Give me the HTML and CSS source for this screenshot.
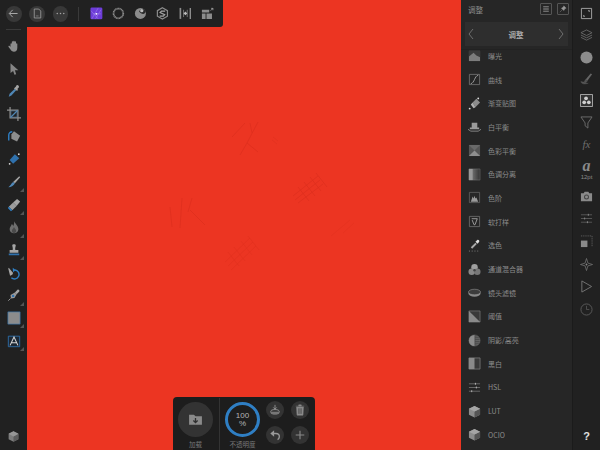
FILE: index.html
```html
<!DOCTYPE html>
<html lang="zh">

<head>
    <meta charset="UTF-8">
    <title>Affinity Photo</title>
    <link rel="stylesheet" href="styles.css">
</head>

<body>
    <div class="app">
        <div class="tools">
            <div class="toolsline"></div>
            <div class="tool"><svg viewBox="0 0 16 16"><path d="M4 9V5.500a.8.8 0 0 1 1.500 0V8V3.500a.8.8 0 0 1 1.600 0V7.500V2.800a.8.8 0 0 1 1.600 0V7.500V3.500a.8.8 0 0 1 1.600 0V8.500V5.500a.8.8 0 0 1 1.500 0V10c0 3-1.500 4.500-3.800 4.500-2 0-3-1-4-2.500L1.800 9c-.6-1 .7-1.800 1.400-1z" fill="#8c8c8c"/></svg></div>
            <div class="tool"><svg viewBox="0 0 16 16"><path d="M4 1.500 13 9.500H9L10.500 14 8.500 14.500 7 10.200 4 12.500z" fill="#858585"/></svg></div>
            <div class="tool"><svg viewBox="0 0 16 16"><path d="M2 14.500 3 11 9 5.500 10.500 7 5 13z" fill="#4f86b5"/><path d="M8.500 4.500 10 3l1-1.500c1-1 3.500 1 2.500 2.500L12 5.500 12.500 7 11.300 7.800 8 5z" fill="#a5a5a5"/></svg></div>
            <div class="tool"><svg viewBox="0 0 16 16"><path d="M3.500 0V12.500H16M0 3.500H12.500V16" fill="none" stroke="#8f8f8f" stroke-width="1.400"/><path d="M4 12 12 4" stroke="#4f86b5" stroke-width="1.400"/><path d="M4.500 4.500H11.500V11.500H4.500z" fill="none" stroke="#4f86b5" stroke-width=".6"/></svg></div>
            <div class="tool"><svg viewBox="0 0 16 16"><path d="M5 5 8 1.500 15 6.500 11.500 13 5 10z" fill="#8d8d8d"/><path d="M2 12V6C2 3 4 2 6 2" fill="none" stroke="#2f7fc4" stroke-width="1.600"/></svg></div>
            <div class="tool"><svg viewBox="0 0 16 16"><path d="M3 9 9 2.500 14 7 7 13.500z" fill="#2f71ad"/><circle cx="3" cy="13.500" r="1" fill="#ddd"/><circle cx="13.500" cy="2.500" r="1" fill="#ddd"/></svg></div>
            <div class="tool more"><svg viewBox="0 0 16 16"><path d="M7 8 14 1.500 15 2.500 9 9.500z" fill="#a5a5a5"/><path d="M7 8 9 9.500C8 12 5 14 1.500 14 4 12.500 4.500 9.500 7 8z" fill="#4f86b5"/></svg></div>
            <div class="tool more"><svg viewBox="0 0 16 16"><path d="M7 5 11.500 1 15 4 11 9z" fill="#a5a5a5"/><path d="M2 10 7 5 11 9 6 14z" fill="#9c9c9c"/><path d="M2 10 6 14 4.500 15 1 11.500z" fill="#2f7fc4"/></svg></div>
            <div class="tool more"><svg viewBox="0 0 16 16"><path d="M8 1C9 4 13 6 13 10.500 13 13.500 10.500 15 8 15S3 13.500 3 10.500C3 7.500 5 7 5.500 4.500 6.500 5.500 7 6 7 7 8 5.500 8.500 3 8 1z" fill="#6e6e6e"/><path d="M8 8C8.500 10 10.500 10.500 10.500 12.500 10.500 14 9 15 8 15S5.500 14 5.500 12.500C5.500 10.500 7.500 10 8 8z" fill="#4b4b4b"/></svg></div>
            <div class="tool more"><svg viewBox="0 0 16 16"><path d="M6 2.500C6 1 10 1 10 2.500 10 4.500 9 5 9.500 8H13V11H3V8H6.500C7 5 6 4.500 6 2.500z" fill="#a5a5a5"/><path d="M2 12H14V14H2z" fill="#2f71ad"/></svg></div>
            <div class="tool"><svg viewBox="0 0 16 16"><path d="M2 2 7 8 6 10 3.500 11 1.500 3z" fill="#a5a5a5"/><path d="M9 4.500A5.200 5.200 0 1 1 5 13.500" fill="none" stroke="#2f7fc4" stroke-width="1.600"/><path d="M6.500 2 10 4.500 7 7z" fill="#2f7fc4"/></svg></div>
            <div class="tool more"><svg viewBox="0 0 16 16"><path d="M9 5 12 2C13 1 15 3 14 4L11 7z" fill="#a5a5a5"/><path d="M9 5 11 7 8.500 11.500 4.500 12 4 8z" fill="#9a9a9a"/><circle cx="7" cy="9" r="1.400" fill="#2f71ad"/><path d="M4 12 1.500 14.500" stroke="#a5a5a5"/></svg></div>
            <div class="tool more"><svg viewBox="0 0 16 16"><path d="M1 1H15V15H1z" fill="#8c8c8c" stroke="#2f71ad" stroke-width=".7"/></svg></div>
            <div class="tool more"><svg viewBox="0 0 16 16"><path d="M1.500 2.500H14.500V14.500H1.500z" fill="#1c2733" stroke="#2f71ad"/><path d="M3.500 13 8 3.500 12.500 13M5.300 10H10.700" fill="none" stroke="#d5d5d5" stroke-width="1.200"/></svg></div>
            <div class="tool cube"><svg viewBox="0 0 16 16"><path d="M8 1.500 14 4.500V11.500L8 14.500 2 11.500V4.500z" fill="#7d7d7d"/><path d="M8 8 14 4.500V11.500L8 14.500z" fill="#5c5c5c"/><path d="M8 8 2 4.500 8 1.500 14 4.500z" fill="#969696"/></svg></div>
        </div>

        <div class="canvas">
            <svg class="marks" viewBox="0 0 433 450">
                <g fill="none" stroke="#d62e1c" stroke-width=".6" opacity=".8">
                    <path d="M231 122 220 143 213 155M220 143 231 152M205 137 218 123M223 123 225 133"/>
                    <path d="M145 227 143 207M153 228 155 198M163 210 178 225M165 198 161 212"/>
                    <path d="M246 137 251 141M245 140 250 144" opacity=".6"/>
                    <path d="M291 176 266 196M293 180 268 200M296 184 271 203M289 173 300 187M283 177 294 191M277 182 288 196M271 187 282 201"/>
                    <path d="M223 238 198 262M226 242 201 266M229 246 204 270M221 236 232 250M214 241 225 255M207 247 218 261M201 252 212 266" opacity=".55"/>
                    <path d="M323 220 304 236M327 223 316 233" opacity=".45"/>
                </g>
            </svg>
        </div>

        <div class="panel">
            <div class="panelhead">
                <span>调整</span>
                <div class="headbtns">
                    <div class="headbtn"><svg viewBox="0 0 10 10"><path d="M1.500 2H8.500M1.500 4H8.500M1.500 6H8.500M1.500 8H8.500" stroke="#8a8a8a"/></svg></div>
                    <div class="headbtn"><svg viewBox="0 0 10 10"><path d="M6 1 9 4 7.500 4.500 6 7 3 4 5.500 2.500zM4 6 1 9" fill="#9a9a9a" stroke="#9a9a9a" stroke-width=".5"/></svg></div>
                </div>
            </div>
            <div class="panelnav">
                <svg class="chev" viewBox="0 0 6 12"><path d="M5 1 1 6 5 11" fill="none" stroke="#6f6f6f"/></svg>
                <b>调整</b>
                <svg class="chev" viewBox="0 0 6 12"><path d="M1 1 5 6 1 11" fill="none" stroke="#6f6f6f"/></svg>
            </div>
            <div class="list">
                <div class="listinner">
                    <div class="row"><svg viewBox="0 0 14 14"><path d="M1 2H13V13H1z" fill="#7c7c7c"/><path d="M1 2H13V9L9 7 6 4 1 8z" fill="#3a3a3a"/></svg><span>曝光</span></div>
                    <div class="row"><svg viewBox="0 0 14 14"><path d="M1.500 1.500H12.500V12.500H1.500z" fill="none" stroke="#7c7c7c" stroke-width=".8"/><path d="M3 11.500C7 11 7 3 11 2.500" fill="none" stroke="#a0a0a0"/></svg><span>曲线</span></div>
                    <div class="row"><svg viewBox="0 0 14 14"><path d="M5 6 9 2 13 6 8 11z" fill="#8c8c8c"/><path d="M3 8 5 6 8 11 6 12z" fill="#b0b0b0"/><circle cx="1.800" cy="12.500" r="1" fill="#ddd"/><circle cx="11" cy="1.500" r="1" fill="#ddd"/></svg><span>渐变贴图</span></div>
                    <div class="row"><svg viewBox="0 0 14 14"><path d="M4 3H10V8H12V10H2V8H4z" fill="#9a9a9a"/><path d="M0 10 3 12H11L14 10" fill="none" stroke="#8a8a8a"/></svg><span>白平衡</span></div>
                    <div class="row"><svg viewBox="0 0 14 14"><path d="M1 1H13V13H1z" fill="#555"/><path d="M1 1 13 1 7 7z" fill="#6a6a6a"/><path d="M1 13 7 7 13 13z" fill="#8e8e8e"/></svg><span>色彩平衡</span></div>
                    <div class="row"><svg viewBox="0 0 14 14"><defs><linearGradient id="pg"><stop offset="0" stop-color="#888"/><stop offset="1" stop-color="#333"/></linearGradient></defs><path d="M1 1H13V13H1z" fill="url(#pg)" stroke="#777" stroke-width=".5"/><path d="M1 1H5V13H1z" fill="#999"/></svg><span>色调分离</span></div>
                    <div class="row"><svg viewBox="0 0 14 14"><path d="M1.500 1.500H12.500V12.500H1.500z" fill="none" stroke="#666" stroke-width=".8"/><path d="M3 11.500 5 6 6 8 7 5 8 8 9 7 11 11.500z" fill="#9a9a9a"/></svg><span>色阶</span></div>
                    <div class="row"><svg viewBox="0 0 14 14"><path d="M1.500 1.500H12.500V12.500H1.500z" fill="none" stroke="#777" stroke-width=".8"/><path d="M4 4H10L7.500 10.500H6.500L4.500 5.500" fill="none" stroke="#a0a0a0"/></svg><span>软打样</span></div>
                    <div class="row"><svg viewBox="0 0 14 14"><path d="M3 9 8 4 9.500 5.500 4.500 10.500z" fill="#aaa"/><path d="M8 3 10 1C11 0 13 2 12 3L10.500 5z" fill="#ddd"/><path d="M1 13H2M4 13H5M7 13H8M10 13H11" stroke="#888"/></svg><span>选色</span></div>
                    <div class="row"><svg viewBox="0 0 14 14"><circle cx="7" cy="4.500" r="3.500" fill="#a0a0a0"/><circle cx="4" cy="9.500" r="3.500" fill="#888"/><circle cx="10" cy="9.500" r="3.500" fill="#777"/><circle cx="7" cy="7.800" r="1.300" fill="#444"/></svg><span>通道混合器</span></div>
                    <div class="row"><svg viewBox="0 0 14 14"><ellipse cx="7" cy="8" rx="6.500" ry="3.500" fill="#888"/><ellipse cx="7" cy="6.500" rx="6.500" ry="3" fill="#3c3c3c" stroke="#9a9a9a" stroke-width=".6"/></svg><span>镜头滤镜</span></div>
                    <div class="row"><svg viewBox="0 0 14 14"><path d="M1 1H13V13H1z" fill="#3a3a3a" stroke="#8a8a8a" stroke-width=".6"/><path d="M1 1 13 13H1z" fill="#8a8a8a"/></svg><span>阈值</span></div>
                    <div class="row"><svg viewBox="0 0 14 14"><circle cx="7" cy="7" r="6" fill="#4a4a4a" stroke="#7a7a7a" stroke-width=".5"/><path d="M7 1A6 6 0 0 0 7 13z" fill="#8c8c8c"/><path d="M8 3H11M8 5H12.500M8 7H13M8 9H12.500M8 11H11" stroke="#777" stroke-width=".6"/></svg><span>阴影/高亮</span></div>
                    <div class="row"><svg viewBox="0 0 14 14"><path d="M1 1H13V13H1z" fill="#3a3a3a" stroke="#8a8a8a" stroke-width=".7"/><path d="M1 1H7V13H1z" fill="#8a8a8a"/></svg><span>黑白</span></div>
                    <div class="row"><svg viewBox="0 0 14 14"><path d="M1 3H13M1 7H13M1 11H13" stroke="#8a8a8a" stroke-width=".7"/><path d="M8 2V4M9 6V8M4 10V12" stroke="#bbb"/></svg><span>HSL</span></div>
                    <div class="row"><svg viewBox="0 0 14 14"><path d="M7 1 13 4V10.500L7 13.500 1 10.500V4z" fill="#8c8c8c"/><path d="M7 7 13 4V10.500L7 13.500z" fill="#555"/><path d="M7 7 1 4 7 1 13 4z" fill="#a5a5a5"/></svg><span>LUT</span></div>
                    <div class="row"><svg viewBox="0 0 14 14"><path d="M7 1 13 4V10.500L7 13.500 1 10.500V4z" fill="#8c8c8c"/><path d="M7 7 13 4V10.500L7 13.500z" fill="#555"/><path d="M7 7 1 4 7 1 13 4z" fill="#a5a5a5"/></svg><span>OCIO</span></div>
                </div>
            </div>
        </div>

        <div class="strip">
            <div class="stripitem tight"><svg viewBox="0 0 14 14"><path d="M1.500 1.500H12.500V12.500H1.500z" fill="none" stroke="#a8a8a8"/><path d="M9 4H10V5M4 9V10H5" fill="none" stroke="#d0d0d0"/></svg></div>
            <div class="stripitem tight"><svg viewBox="0 0 14 14"><path d="M7 1 13 4 7 7 1 4zM1 6.500 7 9.500 13 6.500M1 9 7 12 13 9" fill="none" stroke="#666"/></svg></div>
            <div class="stripitem tight"><svg viewBox="0 0 14 14"><circle cx="7" cy="7" r="6.500" fill="#8c8c8c"/></svg></div>
            <div class="stripitem tight"><svg viewBox="0 0 14 14"><path d="M6 8 11.500 1.500 13 2.500 8 9.500z" fill="#666"/><path d="M6 8 8 9.500C7.500 11 5.500 11.500 4 11 5 10.500 5 9 6 8zM1 10C1 13 5 13.500 9 12" fill="#555" stroke="#555" stroke-width=".5"/></svg></div>
            <div class="stripitem tight"><svg viewBox="0 0 14 14"><path d="M.5.500H13.500V13.500H.5z" fill="#333" stroke="#b0b0b0"/><circle cx="6.500" cy="4.700" r="2" fill="#d0d0d0"/><circle cx="4.500" cy="9" r="2" fill="#d0d0d0"/><circle cx="9.500" cy="9" r="2" fill="#d0d0d0"/></svg></div>
            <div class="stripitem tight"><svg viewBox="0 0 14 14"><path d="M1 1H13L8.500 7.500V13L5.500 10.500V7.500z" fill="none" stroke="#6f6f6f"/></svg></div>
            <div class="stripitem tight fx">fx</div>
            <div class="stripitem type"><i>a</i><small>12pt</small></div>
            <div class="stripitem"><svg viewBox="0 0 14 14"><path d="M1 3.500H4L5 2H9L10 3.500H13V12H1z" fill="#8a8a8a"/><circle cx="7" cy="7.500" r="2.700" fill="#444"/><circle cx="7" cy="7.500" r="1.600" fill="#8a8a8a"/></svg></div>
            <div class="stripitem"><svg viewBox="0 0 14 14"><path d="M1 3H13M1 7H13M1 11H13" stroke="#666" stroke-width=".8"/><path d="M9 2V4M5 6V8M8 10V12" stroke="#8a8a8a"/></svg></div>
            <div class="stripitem"><svg viewBox="0 0 14 14"><path d="M1 1H13V13" fill="none" stroke="#6a6a6a" stroke-dasharray="1 1"/><path d="M1 6H8V13H1z" fill="#8a8a8a"/></svg></div>
            <div class="stripitem"><svg viewBox="0 0 14 14"><path d="M7 .500 8.500 5.500 13.500 7 8.500 8.500 7 13.500 5.500 8.500.500 7 5.500 5.500z" fill="none" stroke="#777" stroke-width=".8"/><circle cx="7" cy="7" r="1" fill="#8a8a8a"/></svg></div>
            <div class="stripitem"><svg viewBox="0 0 14 14"><path d="M2 1 12.500 7 2 13z" fill="none" stroke="#777"/></svg></div>
            <div class="stripitem"><svg viewBox="0 0 14 14"><circle cx="7" cy="7" r="6" fill="none" stroke="#5c5c5c"/><path d="M7 3V7H10" fill="none" stroke="#5c5c5c" stroke-width=".8"/></svg></div>
            <div class="stripitem help">?</div>
        </div>

        <div class="topbar">
            <div class="roundbtn"><svg viewBox="0 0 16 16"><path d="M13 8H3M7 3.500 2.800 8 7 12.500" fill="none" stroke="#b5b5b5" stroke-width="1.100"/></svg></div>
            <div class="roundbtn"><svg viewBox="0 0 16 16"><path d="M4 2.500H9.500L12 5V13.500H4z" fill="none" stroke="#a0a0a0"/><path d="M6 11H10" stroke="#a0a0a0" stroke-dasharray="1 .7"/></svg></div>
            <div class="roundbtn"><svg viewBox="0 0 16 16"><circle cx="4" cy="8" r=".9" fill="#a5a5a5"/><circle cx="8" cy="8" r=".9" fill="#a5a5a5"/><circle cx="12" cy="8" r=".9" fill="#a5a5a5"/></svg></div>
            <div class="topline"></div>
            <div class="persona"><svg viewBox="0 0 14 14"><rect width="13" height="13" x=".5" y=".5" rx="1.500" fill="#6d3cd8"/><path d="M2 13 9 1M6 13 12 3M3 7.500H12M1 4 9 13" fill="none" stroke="#a98cf0" stroke-width=".5"/><circle cx="7" cy="7.500" r="1" fill="#fff"/></svg></div>
            <div class="persona"><svg viewBox="0 0 14 14"><circle cx="7" cy="7" r="5.300" fill="none" stroke="#8a8a8a" stroke-width="1.900" stroke-dasharray="1.200 .4"/></svg></div>
            <div class="persona"><svg viewBox="0 0 14 14"><circle cx="7" cy="7" r="6" fill="#8c8c8c"/><path d="M5.500 5A4 4 0 0 1 13 4.500C12 9 8 8 5.500 5z" fill="#2b2b2b"/><circle cx="8.500" cy="4" r="1.800" fill="#bbb"/></svg></div>
            <div class="persona"><svg viewBox="0 0 14 14"><path d="M7 .8 12.500 4V10L7 13.200 1.500 10V4z" fill="none" stroke="#8c8c8c" stroke-width="1.300"/><path d="M10 4.500H6L4.500 6 9.500 8.500 8 10H4" fill="none" stroke="#a5a5a5" stroke-width="1.300"/></svg></div>
            <div class="persona"><svg viewBox="0 0 14 14"><path d="M1.500 1V13" stroke="#8c8c8c" stroke-width="1.800"/><path d="M5 3V11M9 3V11" stroke="#777" stroke-width="1"/><path d="M12.500 1V13" stroke="#8c8c8c" stroke-width="1.800"/><path d="M5 7 7 5V9zM9 7 7 5V9z" fill="#bbb"/></svg></div>
            <div class="persona"><svg viewBox="0 0 14 14"><path d="M1 3H9V6H1zM1 7H5V13H1zM6 7H12V13H6z" fill="#8c8c8c"/><path d="M10.500 4 13 1.500M11 1.500H13V3.500" fill="none" stroke="#b0b0b0" stroke-width=".8"/></svg></div>
        </div>

        <div class="dock">
            <div class="dockcol">
                <div class="loadbtn"><svg viewBox="0 0 14 14"><path d="M1 2.500H5.500L7 4H13V12H1z" fill="#8a8a8a"/><path d="M7 5.500V9.500M5 8 7 10 9 8" fill="none" stroke="#2f2f2f" stroke-width="1.200"/></svg></div>
                <span>加载</span>
            </div>
            <div class="dockline"></div>
            <div class="dockcol">
                <div class="ring"><b>100</b><b>%</b></div>
                <span>不透明度</span>
            </div>
            <div class="dockbtns">
                <div class="smallbtn"><svg viewBox="0 0 14 14"><path d="M7 1V6M5 4 7 6 9 4" fill="none" stroke="#999"/><ellipse cx="7" cy="9" rx="5" ry="2.500" fill="none" stroke="#999"/><path d="M2 9V10.500C2 13 12 13 12 10.500V9" fill="#777"/></svg></div>
                <div class="smallbtn"><svg viewBox="0 0 14 14"><path d="M3 3.500H11L10.500 13H3.500zM2 2.500H12M5.500 2.500V1H8.500V2.500" fill="#8a8a8a" stroke="#8a8a8a" stroke-width=".6"/><path d="M5.500 5V11.500M7 5V11.500M8.500 5V11.500" stroke="#333" stroke-width=".6"/></svg></div>
                <div class="smallbtn"><svg viewBox="0 0 14 14"><path d="M6 1.500V9L1.500 5.200z" fill="#999"/><path d="M5 5.200H8C11 5.200 12.500 7 12 9.500 11.800 11 11 12 10 12.500" fill="none" stroke="#999" stroke-width="1.600"/></svg></div>
                <div class="smallbtn"><svg viewBox="0 0 14 14"><path d="M7 2V12M2 7H12" stroke="#8a8a8a" stroke-width="1.300"/></svg></div>
            </div>
        </div>
    </div>
</body>

</html>
```

FILE: styles.css
```css
* {
    margin: 0;
    padding: 0;
    box-sizing: border-box;
    font-family: "Noto Sans CJK SC", "Liberation Sans", sans-serif;
}

body {
    overflow: hidden;
    background-color: #212121;
}

svg {
    display: block;
}

.app {
    position: relative;
    display: flex;
    width: 600px;
    height: 450px;
    overflow: hidden;
}

/* left tools */
.tools {
    display: flex;
    flex-direction: column;
    align-items: center;
    width: 27px;
    padding-top: 29px;
    background-color: #212121;
}

.toolsline {
    width: 15px;
    height: 1px;
    margin-bottom: 4.500px;
    background-color: #3a3a3a;
}

.tool {
    position: relative;
    display: flex;
    justify-content: center;
    align-items: center;
    width: 27px;
    height: 22.700px;
    flex-shrink: 0;
}

.tool svg {
    width: 14px;
    height: 14px;
}

.more::after {
    content: "";
    position: absolute;
    right: 3px;
    bottom: 1px;
    border-style: solid;
    border-width: 0 0 4px 4px;
    border-color: transparent transparent #555 transparent;
}

.cube {
    margin-top: auto;
    margin-bottom: 2px;
}

.cube svg {
    width: 13px;
    height: 13px;
}

/* canvas */
.canvas {
    flex: 1;
    background-color: #ec3522;
}

.marks {
    width: 433px;
    height: 450px;
}

/* right panel */
.panel {
    display: flex;
    flex-direction: column;
    width: 112px;
    background-color: #262626;
    border-right: 1px solid #1b1b1b;
}

.panelhead {
    display: flex;
    justify-content: space-between;
    align-items: center;
    height: 18px;
    padding: 0 3px 0 7px;
    font-size: 7.500px;
    color: #8f8f8f;
}

.headbtns {
    display: flex;
    gap: 5px;
}

.headbtn {
    width: 12px;
    height: 12px;
    padding: 1px;
    border: 1px solid #555;
    border-radius: 1px;
}

.panelnav {
    display: flex;
    justify-content: space-between;
    align-items: center;
    height: 24px;
    margin: 4px 4px 0;
    padding: 0 4px 0 3px;
    background-color: #2e2e2e;
    font-size: 7.500px;
    color: #a8a8a8;
}

.chev {
    width: 6px;
    height: 12px;
}

.list {
    flex: 1;
    margin-top: 3px;
    overflow: hidden;
    border-top: 1px solid #222;
}

.listinner {
    margin-top: -6px;
}

.row {
    display: flex;
    align-items: center;
    gap: 7.500px;
    height: 23.700px;
    padding-left: 6.500px;
    font-size: 7px;
    color: #8c8c8c;
}

.row svg {
    width: 13px;
    height: 13px;
}

/* far right strip */
.strip {
    display: flex;
    flex-direction: column;
    align-items: center;
    width: 27px;
    padding-top: 3px;
    background-color: #212121;
}

.stripitem {
    display: flex;
    flex-direction: column;
    justify-content: center;
    align-items: center;
    width: 27px;
    height: 22.700px;
    flex-shrink: 0;
}

.tight {
    height: 21.700px;
}

.stripitem svg {
    width: 13px;
    height: 13px;
}

.fx {
    font-family: "Liberation Serif", serif;
    font-style: italic;
    font-size: 11px;
    color: #6f6f6f;
}

.type {
    height: 30px;
    color: #8a8a8a;
}

.type i {
    font-family: "Liberation Serif", serif;
    font-size: 16px;
    font-weight: bold;
    line-height: 14px;
}

.type small {
    font-family: "Liberation Sans", sans-serif;
    font-size: 6px;
    line-height: 8px;
}

.help {
    margin-top: auto;
    margin-bottom: 3px;
    font-family: "Liberation Sans", sans-serif;
    font-size: 11px;
    font-weight: bold;
    color: #e0e0e0;
}

/* top bar, lies over the canvas */
.topbar {
    position: absolute;
    top: 0;
    left: 0;
    display: flex;
    align-items: center;
    width: 223px;
    height: 27px;
    padding-left: 6px;
    background-color: #212121;
    border-bottom-right-radius: 3px;
}

.roundbtn {
    display: flex;
    justify-content: center;
    align-items: center;
    width: 16px;
    height: 16px;
    margin-right: 7.500px;
    border-radius: 50%;
    background-color: #383838;
}

.roundbtn svg {
    width: 13px;
    height: 13px;
}

.topline {
    width: 1px;
    height: 14px;
    margin: 0 11px 0 2px;
    background-color: #3a3a3a;
}

.persona {
    width: 13px;
    height: 13px;
    margin-right: 9.400px;
}

/* bottom dock */
.dock {
    position: absolute;
    left: 173px;
    bottom: 0;
    display: flex;
    width: 142px;
    height: 53px;
    padding: 1px 6px 0 5px;
    background-color: #1d1d1d;
    border-radius: 4px 4px 0 0;
}

.dockcol {
    display: flex;
    flex-direction: column;
    align-items: center;
    gap: 2px;
    padding-top: 4px;
    font-size: 6.500px;
    color: #777;
}

.dockcol span {
    line-height: 10px;
}

.loadbtn {
    display: flex;
    justify-content: center;
    align-items: center;
    width: 35px;
    height: 35px;
    border-radius: 50%;
    background-color: #333;
}

.loadbtn svg {
    width: 15px;
    height: 15px;
}

.dockline {
    width: 1px;
    margin: 0 5.500px;
    background-color: #333;
}

.ring {
    display: flex;
    flex-direction: column;
    justify-content: center;
    align-items: center;
    width: 35px;
    height: 35px;
    border: 3px solid #2f7fc4;
    border-radius: 50%;
    color: #b5b5b5;
    font-family: "Liberation Sans", sans-serif;
    font-size: 8px;
    line-height: 8px;
}

.ring b {
    font-family: "Liberation Sans", sans-serif;
    font-weight: normal;
}

.dockbtns {
    display: grid;
    grid-template-columns: 18px 18px;
    align-content: start;
    gap: 7px;
    margin: 3px 0 0 auto;
}

.smallbtn {
    display: flex;
    justify-content: center;
    align-items: center;
    width: 18px;
    height: 18px;
    border-radius: 50%;
    background-color: #333;
}

.smallbtn svg {
    width: 12px;
    height: 12px;
}
```
